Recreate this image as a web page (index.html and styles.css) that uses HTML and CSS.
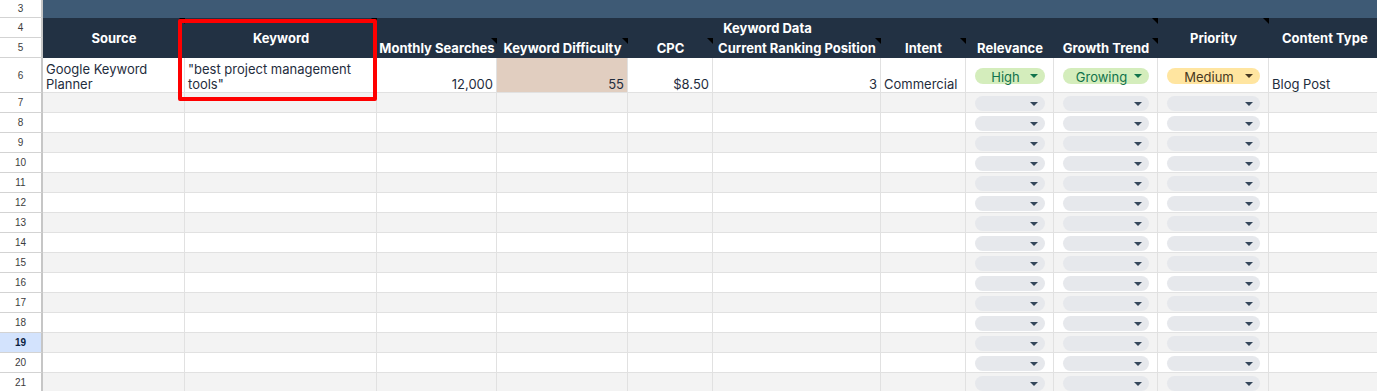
FILE: index.html
```html
<!DOCTYPE html>
<html lang="en">
<head>
<meta charset="utf-8">
<title>Keyword Research Sheet</title>
<link rel="stylesheet" href="styles.css">
</head>
<body>
<div class="sheet">
  <div class="grid">
    <!-- Row 3 -->
    <div class="rn">3</div>
    <div class="title-band"></div>

    <!-- Rows 4-5 header -->
    <div class="rn r4">4</div>
    <div class="rn r5">5</div>
    <div class="hd merged c-source note">Source</div>
    <div class="hd merged c-keyword note">Keyword</div>
    <div class="hd group note">Keyword Data</div>
    <div class="hd sub c3 note">Monthly Searches</div>
    <div class="hd sub c4 note">Keyword Difficulty</div>
    <div class="hd sub c5 note">CPC</div>
    <div class="hd sub c6 note">Current Ranking Position</div>
    <div class="hd sub c7 note">Intent</div>
    <div class="hd sub c8">Relevance</div>
    <div class="hd sub c9 note">Growth Trend</div>
    <div class="hd merged c-priority note">Priority</div>
    <div class="hd merged c-content">Content Type</div>

    <!-- Row 6 -->
    <div class="rn">6</div>
    <div class="cell">Google Keyword Planner</div>
    <div class="cell">"best project management tools"</div>
    <div class="cell num">12,000</div>
    <div class="cell num tan">55</div>
    <div class="cell num">$8.50</div>
    <div class="cell num">3</div>
    <div class="cell">Commercial</div>
    <div class="cell chipcell first"><span class="chip green"><span class="lbl">High</span><span class="arr"></span></span></div>
    <div class="cell chipcell first"><span class="chip green"><span class="lbl">Growing</span><span class="arr"></span></span></div>
    <div class="cell chipcell first"><span class="chip yellow"><span class="lbl">Medium</span><span class="arr"></span></span></div>
    <div class="cell">Blog Post</div>

    <!-- Rows 7-21 -->
    <div class="rn">7</div><div class="cell odd"></div><div class="cell odd"></div><div class="cell odd"></div><div class="cell odd"></div><div class="cell odd"></div><div class="cell odd"></div><div class="cell odd"></div><div class="cell odd chipcell"><span class="chip empty"><span class="arr"></span></span></div><div class="cell odd chipcell"><span class="chip empty"><span class="arr"></span></span></div><div class="cell odd chipcell"><span class="chip empty"><span class="arr"></span></span></div><div class="cell odd"></div>
    <div class="rn">8</div><div class="cell"></div><div class="cell"></div><div class="cell"></div><div class="cell"></div><div class="cell"></div><div class="cell"></div><div class="cell"></div><div class="cell chipcell"><span class="chip empty"><span class="arr"></span></span></div><div class="cell chipcell"><span class="chip empty"><span class="arr"></span></span></div><div class="cell chipcell"><span class="chip empty"><span class="arr"></span></span></div><div class="cell"></div>
    <div class="rn">9</div><div class="cell odd"></div><div class="cell odd"></div><div class="cell odd"></div><div class="cell odd"></div><div class="cell odd"></div><div class="cell odd"></div><div class="cell odd"></div><div class="cell odd chipcell"><span class="chip empty"><span class="arr"></span></span></div><div class="cell odd chipcell"><span class="chip empty"><span class="arr"></span></span></div><div class="cell odd chipcell"><span class="chip empty"><span class="arr"></span></span></div><div class="cell odd"></div>
    <div class="rn">10</div><div class="cell"></div><div class="cell"></div><div class="cell"></div><div class="cell"></div><div class="cell"></div><div class="cell"></div><div class="cell"></div><div class="cell chipcell"><span class="chip empty"><span class="arr"></span></span></div><div class="cell chipcell"><span class="chip empty"><span class="arr"></span></span></div><div class="cell chipcell"><span class="chip empty"><span class="arr"></span></span></div><div class="cell"></div>
    <div class="rn">11</div><div class="cell odd"></div><div class="cell odd"></div><div class="cell odd"></div><div class="cell odd"></div><div class="cell odd"></div><div class="cell odd"></div><div class="cell odd"></div><div class="cell odd chipcell"><span class="chip empty"><span class="arr"></span></span></div><div class="cell odd chipcell"><span class="chip empty"><span class="arr"></span></span></div><div class="cell odd chipcell"><span class="chip empty"><span class="arr"></span></span></div><div class="cell odd"></div>
    <div class="rn">12</div><div class="cell"></div><div class="cell"></div><div class="cell"></div><div class="cell"></div><div class="cell"></div><div class="cell"></div><div class="cell"></div><div class="cell chipcell"><span class="chip empty"><span class="arr"></span></span></div><div class="cell chipcell"><span class="chip empty"><span class="arr"></span></span></div><div class="cell chipcell"><span class="chip empty"><span class="arr"></span></span></div><div class="cell"></div>
    <div class="rn">13</div><div class="cell odd"></div><div class="cell odd"></div><div class="cell odd"></div><div class="cell odd"></div><div class="cell odd"></div><div class="cell odd"></div><div class="cell odd"></div><div class="cell odd chipcell"><span class="chip empty"><span class="arr"></span></span></div><div class="cell odd chipcell"><span class="chip empty"><span class="arr"></span></span></div><div class="cell odd chipcell"><span class="chip empty"><span class="arr"></span></span></div><div class="cell odd"></div>
    <div class="rn">14</div><div class="cell"></div><div class="cell"></div><div class="cell"></div><div class="cell"></div><div class="cell"></div><div class="cell"></div><div class="cell"></div><div class="cell chipcell"><span class="chip empty"><span class="arr"></span></span></div><div class="cell chipcell"><span class="chip empty"><span class="arr"></span></span></div><div class="cell chipcell"><span class="chip empty"><span class="arr"></span></span></div><div class="cell"></div>
    <div class="rn">15</div><div class="cell odd"></div><div class="cell odd"></div><div class="cell odd"></div><div class="cell odd"></div><div class="cell odd"></div><div class="cell odd"></div><div class="cell odd"></div><div class="cell odd chipcell"><span class="chip empty"><span class="arr"></span></span></div><div class="cell odd chipcell"><span class="chip empty"><span class="arr"></span></span></div><div class="cell odd chipcell"><span class="chip empty"><span class="arr"></span></span></div><div class="cell odd"></div>
    <div class="rn">16</div><div class="cell"></div><div class="cell"></div><div class="cell"></div><div class="cell"></div><div class="cell"></div><div class="cell"></div><div class="cell"></div><div class="cell chipcell"><span class="chip empty"><span class="arr"></span></span></div><div class="cell chipcell"><span class="chip empty"><span class="arr"></span></span></div><div class="cell chipcell"><span class="chip empty"><span class="arr"></span></span></div><div class="cell"></div>
    <div class="rn">17</div><div class="cell odd"></div><div class="cell odd"></div><div class="cell odd"></div><div class="cell odd"></div><div class="cell odd"></div><div class="cell odd"></div><div class="cell odd"></div><div class="cell odd chipcell"><span class="chip empty"><span class="arr"></span></span></div><div class="cell odd chipcell"><span class="chip empty"><span class="arr"></span></span></div><div class="cell odd chipcell"><span class="chip empty"><span class="arr"></span></span></div><div class="cell odd"></div>
    <div class="rn">18</div><div class="cell"></div><div class="cell"></div><div class="cell"></div><div class="cell"></div><div class="cell"></div><div class="cell"></div><div class="cell"></div><div class="cell chipcell"><span class="chip empty"><span class="arr"></span></span></div><div class="cell chipcell"><span class="chip empty"><span class="arr"></span></span></div><div class="cell chipcell"><span class="chip empty"><span class="arr"></span></span></div><div class="cell"></div>
    <div class="rn sel">19</div><div class="cell odd"></div><div class="cell odd"></div><div class="cell odd"></div><div class="cell odd"></div><div class="cell odd"></div><div class="cell odd"></div><div class="cell odd"></div><div class="cell odd chipcell"><span class="chip empty"><span class="arr"></span></span></div><div class="cell odd chipcell"><span class="chip empty"><span class="arr"></span></span></div><div class="cell odd chipcell"><span class="chip empty"><span class="arr"></span></span></div><div class="cell odd"></div>
    <div class="rn">20</div><div class="cell"></div><div class="cell"></div><div class="cell"></div><div class="cell"></div><div class="cell"></div><div class="cell"></div><div class="cell"></div><div class="cell chipcell"><span class="chip empty"><span class="arr"></span></span></div><div class="cell chipcell"><span class="chip empty"><span class="arr"></span></span></div><div class="cell chipcell"><span class="chip empty"><span class="arr"></span></span></div><div class="cell"></div>
    <div class="rn">21</div><div class="cell odd"></div><div class="cell odd"></div><div class="cell odd"></div><div class="cell odd"></div><div class="cell odd"></div><div class="cell odd"></div><div class="cell odd"></div><div class="cell odd chipcell"><span class="chip empty"><span class="arr"></span></span></div><div class="cell odd chipcell"><span class="chip empty"><span class="arr"></span></span></div><div class="cell odd chipcell"><span class="chip empty"><span class="arr"></span></span></div><div class="cell odd"></div>
  </div>
  <div class="highlight-box"></div>
</div>
</body>
</html>
```

FILE: styles.css
```css
* { box-sizing: border-box; }

html, body {
  margin: 0;
  padding: 0;
  background: #ffffff;
  overflow: hidden;
}

.sheet {
  position: relative;
  width: 1377px;
  height: 391px;
  overflow: hidden;
  font-family: "Inter", "Liberation Sans", sans-serif;
  color: #1f2d3d;
}

.grid {
  display: grid;
  grid-template-columns: 43px 142px 192px 120px 131px 85px 168px 85px 88px 104px 111px 120px;
  grid-template-rows: 18px 20px 20px 35px repeat(15, 20px);
}

/* Row numbers */
.rn {
  grid-column: 1;
  display: flex;
  align-items: center;
  justify-content: center;
  font-family: "Liberation Sans", Arial, sans-serif;
  font-size: 10px;
  color: #3c3c3c;
  background: #ffffff;
  border-right: 2px solid #c6c6c6;
  border-bottom: 1px solid #d3d3d3;
}
.rn.r4 { grid-row: 2; }
.rn.r5 { grid-row: 3; }
.rn.sel {
  background: #d3e3fd;
  color: #0b1e40;
  font-weight: bold;
}

.title-band {
  grid-column: 2 / -1;
  grid-row: 1;
  background: #3e5a75;
}

/* Header cells */
.hd {
  position: relative;
  background: #223143;
  color: #ffffff;
  font-weight: 700;
  font-size: 13px;
  display: flex;
  align-items: center;
  justify-content: center;
  white-space: nowrap;
}
.hd.merged { grid-row: 2 / 4; }
.c-source { grid-column: 2; }
.c-keyword { grid-column: 3; }
.c-priority { grid-column: 11; }
.c-content { grid-column: 12; justify-content: flex-start; padding-left: 13px; }
.hd.group { grid-column: 4 / 11; grid-row: 2; }
.hd.sub { grid-row: 3; }
.c3 { grid-column: 4; }
.c4 { grid-column: 5; }
.c5 { grid-column: 6; }
.c6 { grid-column: 7; }
.c7 { grid-column: 8; }
.c8 { grid-column: 9; }
.c9 { grid-column: 10; }

.note::after {
  content: "";
  position: absolute;
  top: 0;
  right: 0;
  border-top: 6px solid #000000;
  border-left: 6px solid transparent;
}

/* Data cells */
.cell {
  background: #ffffff;
  border-right: 1px solid #e1e1e1;
  border-bottom: 1px solid #e1e1e1;
  font-size: 13px;
  line-height: 15px;
  padding: 0 3px 0 3px;
  display: flex;
  align-items: flex-end;
  overflow: hidden;
  color: #1f2d3d;
}
.cell.odd { background: #f3f3f3; }
.cell.num { justify-content: flex-end; }
.cell.tan { background: #e1cec0; }

.chipcell {
  align-items: flex-start;
  padding: 3px 8px 0 9px;
}
.chipcell.first { padding-top: 10px; }

.chip {
  width: 100%;
  height: 16px;
  border-radius: 8px;
  display: flex;
  align-items: center;
  padding: 0 7px 0 6px;
  font-size: 13px;
}
.chip .lbl {
  flex: 1;
  text-align: center;
  line-height: 16px;
  padding-top: 1px;
}
.chip .arr {
  margin-left: auto;
  width: 0;
  height: 0;
  border-left: 4px solid transparent;
  border-right: 4px solid transparent;
  border-top: 4px solid currentColor;
}
.chip.green { background: #d4edbc; color: #11734b; }
.chip.yellow { background: #ffe5a0; color: #473821; }
.chip.empty { background: #e6e8ec; color: #34465a; height: 15px; }

.highlight-box {
  position: absolute;
  left: 178px;
  top: 19px;
  width: 199px;
  height: 82px;
  border: 4px solid #ff0000;
  border-radius: 2px;
}
```
